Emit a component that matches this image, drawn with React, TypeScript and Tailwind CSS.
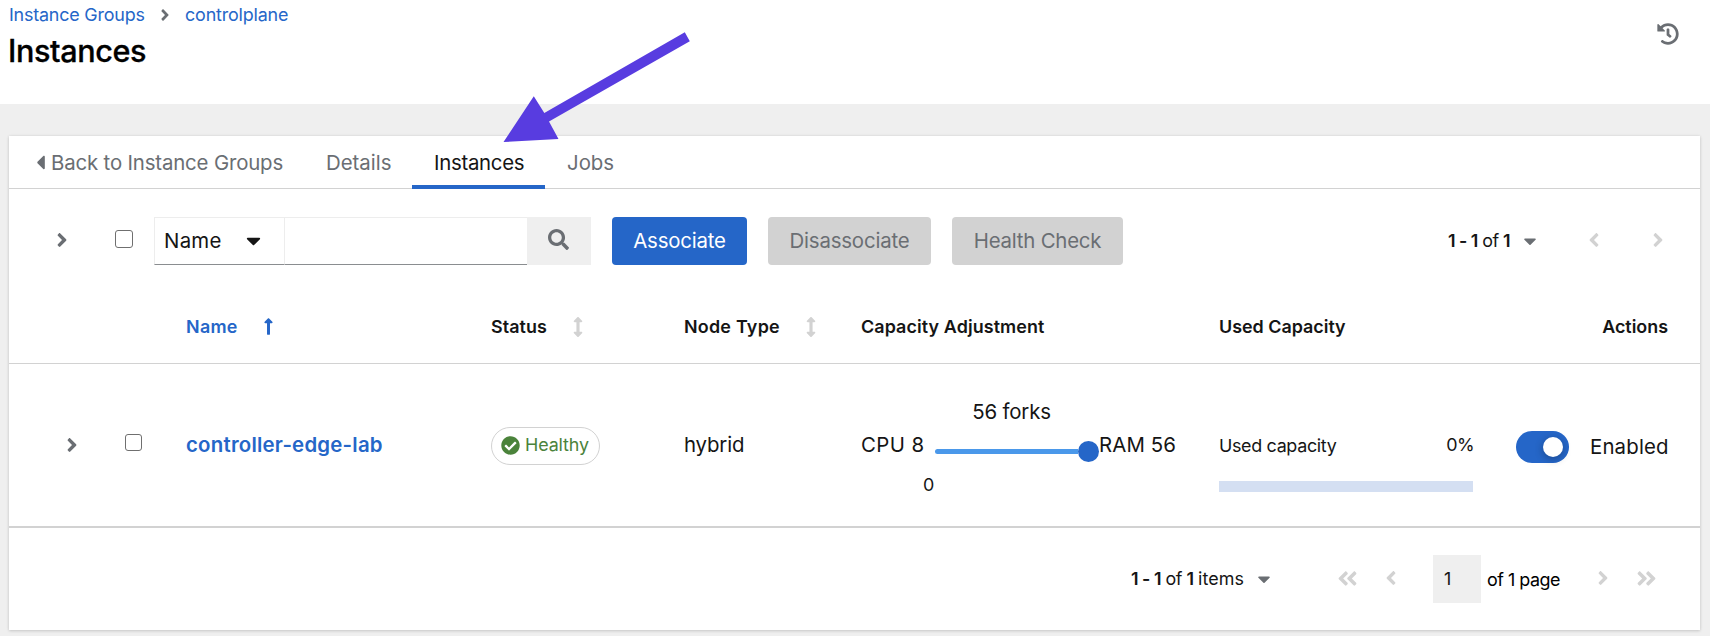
import React from "react";
import {
  FaAngleDoubleLeft,
  FaAngleDoubleRight,
  FaAngleLeft,
  FaAngleRight,
  FaArrowsAltV,
  FaCaretDown,
  FaCaretLeft,
  FaCheckCircle,
  FaHistory,
  FaLongArrowAltUp,
  FaSearch,
} from "react-icons/fa";

const rowGrid =
  "grid grid-cols-[106px_71px_305px_193px_177px_358px_297px_1fr] items-center";

function PageHeader() {
  return (
    <header className="flex h-[104px] justify-between bg-white pl-[9px] pr-[31px]">
      <div className="pt-[3px]">
        <nav className="flex h-6 items-center text-[17.9px] leading-6 text-[#2566c8]">
          <a className="w-[148px] tracking-[-0.19px]">Instance Groups</a>
          <FaAngleRight className="mr-[11px] -ml-px size-[18px] text-[#6a6e73]" />
          <a className="tracking-[-0.16px]">controlplane</a>
        </nav>
        <h1 className="-ml-px mt-1 text-[30.6px] font-medium leading-10 tracking-[-0.4px] text-black [-webkit-text-stroke:0.3px_black]">
          Instances
        </h1>
      </div>
      <FaHistory className="mt-[23px] size-[22px] text-[#6a6e73]" />
    </header>
  );
}

function Tabs() {
  return (
    <div className="flex h-[53px] border-b border-[#d2d2d2] text-[20.4px] text-[#6a6e73]">
      <a className="flex w-[295px] items-center pl-[20px]">
        <FaCaretLeft className="-mr-px size-[23px] shrink-0" />
        <span className="whitespace-nowrap pt-[2px] tracking-[-0.16px]">Back to Instance Groups</span>
      </a>
      <a className="flex w-[108px] items-center pl-[22px] pt-[2px]">Details</a>
      <a className="-mb-px flex w-[133px] items-center border-b-4 border-[#2566c8] pl-[22px] pt-[5px] tracking-[-0.29px] text-[#151515]">
        Instances
      </a>
      <a className="flex items-center pl-[22px] pt-[2px]">Jobs</a>
    </div>
  );
}

function Toolbar() {
  return (
    <div className="flex h-[101px] items-start pr-[45px] pt-7 text-[20.4px] text-[#151515]">
      <div className="flex h-[45px] w-[106px] items-center pl-[42px]">
        <FaAngleRight className="size-[22px] text-[#6a6e73]" />
      </div>
      <span className="mt-[13px] size-[18px] rounded-[3px] border border-[#6f6f6f]" />
      <div className="ml-[21px] flex h-12 w-[131px] items-center border border-b-[#8a8d90] border-l-[#ededed] border-r-[#ededed] border-t-[#ededed] pl-[9px]">
        <span className="w-[70px] tracking-[0.28px]">Name</span>
        <FaCaretDown className="-mt-[2px] ml-[8px] size-[23px]" />
      </div>
      <div className="h-12 w-[242px] border-b border-t border-b-[#8a8d90] border-t-[#ededed]" />
      <div className="flex h-12 w-16 items-center bg-[#efefef] pb-[3px] pl-[21px]">
        <FaSearch className="size-[21px] text-[#6a6e73]" />
      </div>
      <button className="ml-[21px] h-12 w-[135px] rounded bg-[#2566c8] tracking-[-0.19px] text-white">
        Associate
      </button>
      <button className="ml-[21px] h-12 w-[163px] rounded bg-[#d2d2d2] tracking-[-0.18px] text-[#6a6e73]">
        Disassociate
      </button>
      <button className="ml-[21px] h-12 w-[171px] rounded bg-[#d2d2d2] tracking-[-0.21px] text-[#6a6e73]">
        Health Check
      </button>
      <div className="ml-auto flex h-12 items-center text-[17.9px]">
        <span className="w-[72px] whitespace-nowrap tracking-[-0.55px]">
          <b className="font-semibold">1 - 1</b> of <b className="font-semibold">1</b>
        </span>
        <FaCaretDown className="-mt-px mr-[43px] size-[20px] text-[#6a6e73]" />
        <FaAngleLeft className="-mt-[3px] mr-[42px] size-[22px] text-[#d2d2d2]" />
        <FaAngleRight className="-mt-[3px] -mr-[14px] size-[22px] text-[#d2d2d2]" />
      </div>
    </div>
  );
}

function TableHead() {
  return (
    <div
      className={`${rowGrid} h-[74px] border-b border-[#d2d2d2] pt-px text-[17.9px] font-semibold text-[#151515]`}
    >
      <span />
      <span />
      <span className="flex items-center text-[#2566c8]">
        <span className="w-[73px] tracking-[0.3px]">Name</span>
        <FaLongArrowAltUp className="size-[19px]" />
      </span>
      <span className="flex items-center">
        <span className="w-[77px] tracking-[0.08px]">Status</span>
        <FaArrowsAltV className="size-[20px] text-[#d2d2d2]" />
      </span>
      <span className="flex items-center">
        <span className="w-[117px] tracking-[0.24px]">Node Type</span>
        <FaArrowsAltV className="size-[20px] text-[#d2d2d2]" />
      </span>
      <span className="tracking-[0.1px]">Capacity Adjustment</span>
      <span>Used Capacity</span>
      <span className="pr-8 text-right">Actions</span>
    </div>
  );
}

function CapacitySlider() {
  return (
    <div className="flex items-center">
      <span className="w-[74px] tracking-[0.42px]">CPU 8</span>
      <div className="flex h-[102px] w-[164px] flex-col pt-[2px]">
        <span className="-ml-[11px] text-center leading-8 tracking-[-0.16px]">56 forks</span>
        <div className="mt-[13px] flex h-[21px] shrink-0 items-center">
          <span className="h-[5px] flex-1 rounded-l-full bg-[#4a98ea]" />
          <span className="size-[21px] rounded-full bg-[#2566c8]" />
        </div>
        <span className="-ml-[12px] mt-[11px] text-[17.9px] leading-6">0</span>
      </div>
      <span className="tracking-[0.1px]">RAM 56</span>
    </div>
  );
}

function InstanceRow() {
  return (
    <div className={`${rowGrid} h-[164px] border-b-2 border-[#d2d2d2] text-[20.4px] text-[#151515]`}>
      <FaAngleRight className="ml-[52px] size-[22px] text-[#6a6e73]" />
      <span className="-mt-[5px] ml-[10px] size-[17px] rounded-[3px] border border-[#6f6f6f]" />
      <a className="font-semibold tracking-[0.23px] text-[#2566c8]">controller-edge-lab</a>
      <span className="mt-px flex h-[38px] w-[109px] items-center rounded-full border border-[#d2d2d2] pl-[9px] text-[17.9px] text-[#4b833b]">
        <FaCheckCircle className="mr-[5px] size-[19px]" />
        <span className="tracking-[-0.12px]">Healthy</span>
      </span>
      <span className="tracking-[-0.15px]">hybrid</span>
      <CapacitySlider />
      <div className="w-[254px] pt-[46px] text-[17.9px]">
        <div className="-mt-[11px] flex justify-between leading-6">
          <span className="tracking-[-0.32px]">Used capacity</span>
          <span className="-mr-px -mt-px mb-px tracking-[-0.5px]">0%</span>
        </div>
        <div className="mt-[23px] h-[11px] bg-[#d4dff2]" />
      </div>
      <div className="flex items-center pt-1">
        <span className="flex h-8 w-[53px] shrink-0 items-center justify-end rounded-full bg-[#2566c8] pr-[6px]">
          <span className="size-5 rounded-full bg-white shadow-[0_2px_8px_rgba(0,0,0,0.3)]" />
        </span>
        <span className="ml-[21px] tracking-[0.16px]">Enabled</span>
      </div>
    </div>
  );
}

function Footer() {
  return (
    <div className="flex h-[102px] items-center justify-end pr-[42px] text-[17.9px] text-[#151515]">
      <span className="w-[123px] whitespace-nowrap tracking-[-0.5px]">
        <b className="font-semibold">1 - 1</b> of <b className="font-semibold">1</b>{" "}
        <span className="tracking-[0.1px]">items</span>
      </span>
      <FaCaretDown className="-mt-px mr-[62px] size-[20px] text-[#6a6e73]" />
      <FaAngleDoubleLeft className="-mt-[2px] mr-[21px] size-[23px] text-[#d2d2d2]" />
      <FaAngleLeft className="-mt-[2px] mr-[31px] size-[22px] text-[#d2d2d2]" />
      <span className="flex h-12 w-12 items-center bg-[#efefef] pl-[11px] pt-px">1</span>
      <span className="ml-[6px] w-[105px] whitespace-nowrap pt-[2px] tracking-[-0.48px] text-black">of 1 page</span>
      <FaAngleRight className="-mt-[2px] mr-[21px] size-[22px] text-[#d2d2d2]" />
      <FaAngleDoubleRight className="-mt-[2px] size-[23px] text-[#d2d2d2]" />
    </div>
  );
}

export default function App() {
  return (
    <div className="relative h-[636px] w-[1710px] overflow-hidden bg-[#efefef] font-['Inter',sans-serif]">
      <PageHeader />
      <main className="pl-[9px] pr-[10px] pt-8">
        <section className="h-[494px] bg-white shadow-[0_1px_3px_rgba(3,3,3,0.14),0_0_3px_rgba(3,3,3,0.08)]">
          <Tabs />
          <Toolbar />
          <TableHead />
          <InstanceRow />
          <Footer />
        </section>
      </main>
      <svg className="absolute left-[500px] top-[28px] h-[118px] w-[194px]" viewBox="500 28 194 118">
        <path
          d="M503.5 142 533.8 96.3 544.3 113 684.8 32.3 689.8 41.3 549 121.5 558.5 139Z"
          fill="#583ce0"
        />
      </svg>
    </div>
  );
}
